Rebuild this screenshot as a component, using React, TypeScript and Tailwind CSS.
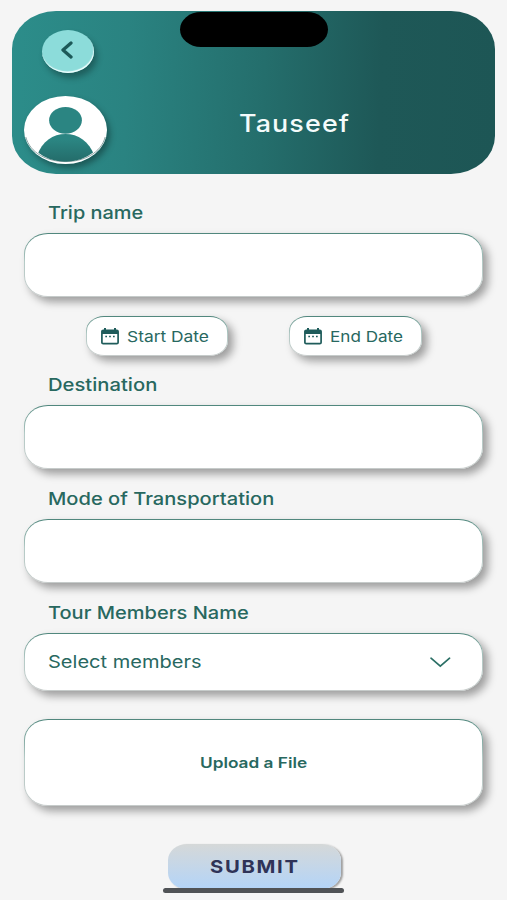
import type { ReactNode } from "react"
import { clsx } from "clsx"

type FieldProps = {
  label: string
  labelClassName?: string
  className?: string
  children?: ReactNode
}

const surface =
  "border border-transparent [background:linear-gradient(#fff,#fff)_padding-box,linear-gradient(to_bottom,#4f867c_0%,#b5cbc7_45%,#c6cbca_100%)_border-box] shadow-[5px_5px_8px_rgba(0,0,0,0.36)]"

function Field({ label, labelClassName, className, children }: FieldProps) {
  return (
    <div>
      <label className="block h-[26px] pl-[24px] text-[17.5px] leading-[26px] font-[550] text-[#28685f]">
        <span className={clsx("inline-block origin-left whitespace-nowrap", labelClassName)}>
          {label}
        </span>
      </label>
      <div
        className={clsx(
          "mt-[7px] flex items-center justify-between rounded-[24px/21px]",
          surface,
          className ?? "h-[64px]"
        )}
      >
        {children}
      </div>
    </div>
  )
}

function CalendarIcon() {
  return (
    <svg viewBox="0 0 18 17" className="h-[17px] w-[18px] shrink-0" fill="none">
      <path
        d="M2.2 2.4h13.6c.8 0 1.3.4 1.3 1.1v11c0 .7-.5 1.1-1.3 1.1H2.2c-.8 0-1.3-.4-1.3-1.1v-11c0-.7.5-1.1 1.3-1.1Z"
        stroke="#1f5c5b"
        strokeWidth="1.7"
      />
      <path d="M1 1.9h16v4.1H1zM3 0h2v2.6H3zM13 0h2v2.6h-2z" fill="#1f5c5b" />
      <path d="M4.3 7.7h1.7v1.5H4.3zM8.15 7.7h1.7v1.5h-1.7zM12 7.7h1.7v1.5H12z" fill="#1f5c5b" />
    </svg>
  )
}

function DateButton({
  label,
  className,
  textClassName,
}: {
  label: string
  className: string
  textClassName: string
}) {
  return (
    <button
      className={clsx(
        "flex h-[40px] items-center gap-[8px] rounded-[18px/15px] pl-[14px] text-[15px] text-[#28685f]",
        surface,
        className
      )}
    >
      <CalendarIcon />
      <span className={clsx("mt-[2px] inline-block origin-left whitespace-nowrap", textClassName)}>
        {label}
      </span>
    </button>
  )
}

function Avatar() {
  return (
    <div className="ml-[12px] mt-[23px] h-[68px] w-[83px] rounded-[50%] shadow-[3px_4px_6px_rgba(0,0,0,0.35)]">
      <svg viewBox="0 0 83 68" className="h-full w-full">
        <defs>
          <linearGradient id="person" gradientUnits="userSpaceOnUse" x1="0" y1="11" x2="0" y2="66">
            <stop offset="0" stopColor="#2b8582" />
            <stop offset="0.6" stopColor="#2b8582" />
            <stop offset="1" stopColor="#246c6a" />
          </linearGradient>
          <clipPath id="disc">
            <ellipse cx="41.5" cy="33" rx="40" ry="32.7" />
          </clipPath>
        </defs>
        <ellipse cx="41.5" cy="34" rx="41.5" ry="34" fill="#fff" />
        <path d="M1.8 41C6 57 23 65.6 41.5 65.6S77 57 81.2 41" fill="none" stroke="#7f9998" strokeWidth="0.9" />
        <g clipPath="url(#disc)" fill="url(#person)">
          <ellipse cx="41.5" cy="24.3" rx="16.4" ry="13.4" />
          <path d="M13 60C18 45 29 38 41.5 38S65 45 70.5 60L62 68H20Z" />
        </g>
      </svg>
    </div>
  )
}

export default function App() {
  return (
    <div className="flex h-[900px] w-[507px] flex-col overflow-hidden bg-[#f5f5f5] font-['Inter',sans-serif]">
      <header className="relative ml-[12px] mt-[11px] flex h-[163px] w-[483px] shrink-0 rounded-[44px/38px] bg-[linear-gradient(92deg,#2c8d8a_0%,#2a8381_24%,#246e6c_52%,#1e5857_76%,#1d5655_100%)]">
        <div className="absolute left-[168px] top-px h-[35px] w-[148px] rounded-[21px/17.5px] bg-black" />
        <div className="w-[120px]">
          <button className="ml-[30px] mt-[19px] flex h-[43px] w-[52px] items-center justify-center rounded-[50%] bg-[#8cdcda] shadow-[inset_-0.5px_-1.5px_1px_#f1ffff,3px_5px_6px_rgba(0,0,0,0.3)]">
            <svg viewBox="0 0 12 18" className="-mt-[3px] -ml-[3px] h-[18px] w-[12px]" fill="none">
              <path d="M10 2 2 9l8 7" stroke="#1c5958" strokeWidth="3.3" strokeLinecap="round" strokeLinejoin="round" />
            </svg>
          </button>
          <Avatar />
        </div>
        <h1 className="ml-[107px] mt-[96px] text-[24px] leading-[34px] font-medium tracking-[1px] text-[#f4fbfb]">
          <span className="inline-block origin-left scale-x-[1.12]">Tauseef</span>
        </h1>
      </header>

      <main className="mx-[24px] mt-[26px] w-[459px]">
        <Field label="Trip name" labelClassName="scale-x-[1.14]" />

        <div className="mt-[19px] flex">
          <DateButton label="Start Date" className="ml-[62px] w-[142px]" textClassName="scale-x-[1.157]" />
          <DateButton label="End Date" className="ml-[61px] w-[133px]" textClassName="scale-x-[1.14]" />
        </div>

        <div className="mt-[16px] flex flex-col gap-[17px]">
          <Field label="Destination" labelClassName="scale-x-[1.155]" />
          <Field label="Mode of Transportation" labelClassName="scale-x-[1.148]" />
          <Field label="Tour Members Name" labelClassName="scale-x-[1.145]" className="h-[58px] pr-[31px] pl-[23px]">
            <span className="inline-block origin-left scale-x-[1.145] text-[17.5px] text-[#28685f]">
              Select members
            </span>
            <svg viewBox="0 0 22 11" className="h-[11px] w-[22px]" fill="none">
              <path d="m2 1.2 9.3 8 9.3-8" stroke="#2b6f65" strokeWidth="1.7" strokeLinecap="round" />
            </svg>
          </Field>
        </div>

        <button
          className={clsx(
            "mt-[28px] flex h-[87px] w-full items-center justify-center rounded-[24px/21px] text-[14px] font-semibold text-[#28685f]",
            surface
          )}
        >
          <span className="inline-block scale-x-[1.23]">Upload a File</span>
        </button>
      </main>

      <div className="relative mt-[38px] ml-[163px] w-[181px]">
        <button className="ml-[5px] flex h-[45px] w-[173px] items-center justify-center rounded-[19px/16px] bg-linear-to-b from-[#d5d8d8] to-[#b3d4f8] text-[18px] font-bold tracking-[1.5px] text-[#2f3358] shadow-[2px_1px_2px_rgba(0,0,0,0.35)]">
          <span className="inline-block scale-x-[1.125]">SUBMIT</span>
        </button>
        <div className="absolute bottom-[-4px] left-0 h-[5px] w-full rounded-full bg-[#505356]" />
      </div>
    </div>
  )
}
